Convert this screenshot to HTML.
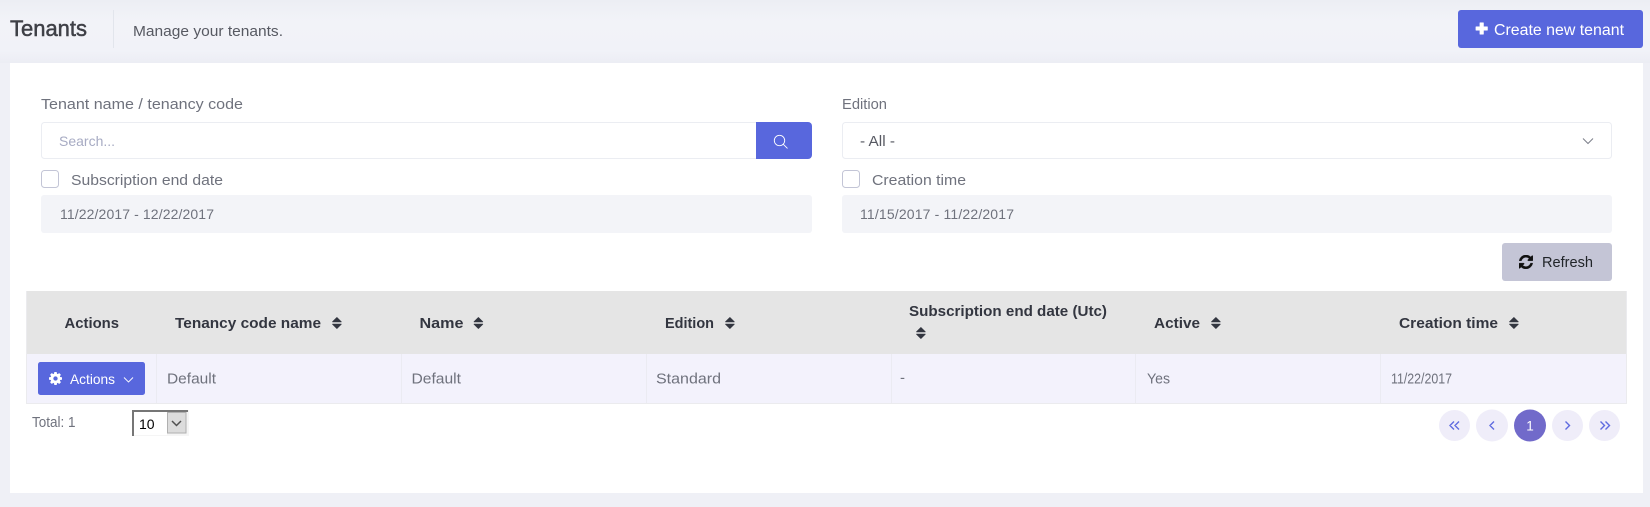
<!DOCTYPE html>
<html lang="en"><head><meta charset="utf-8"><title>Tenants</title>
<style>
html,body{margin:0;padding:0;width:1650px;height:507px;overflow:hidden;background:#eff0f6}
svg{display:block}
text{font-family:"Liberation Sans",sans-serif;font-size:15px;fill:#6f727d}
.b{font-weight:bold;font-size:14.5px;fill:#333640}
</style></head><body>
<svg width="1650" height="507" viewBox="0 0 1650 507" xmlns="http://www.w3.org/2000/svg">
<defs>
<linearGradient id="top" x1="0" y1="0" x2="0" y2="1"><stop offset="0" stop-color="#eceef4"/><stop offset=".35" stop-color="#f2f3f8"/><stop offset=".8" stop-color="#f1f2f8"/><stop offset="1" stop-color="#ecedf4"/></linearGradient>
<g id="sort"><path d="M.6 4.800L4.900 .6 9.200 4.800Z M.6 7.200H9.200L4.900 11.400Z" fill="#333640" stroke="#333640" stroke-width=".9" stroke-linejoin="round"/></g>
</defs>
<rect width="1650" height="507" fill="#eff0f6"/>
<rect width="1650" height="63" fill="url(#top)"/>
<!-- subheader -->
<text x="10" y="36" style="font-size:22px;fill:#3f4047;stroke:#3f4047;stroke-width:.5" textLength="77" lengthAdjust="spacingAndGlyphs">Tenants</text>
<rect x="113" y="10" width="1" height="38" fill="#e2e5ec"/>
<text x="133" y="36" style="fill:#575962" textLength="150" lengthAdjust="spacingAndGlyphs">Manage your tenants.</text>
<rect x="1458" y="10" width="185" height="38" rx="3" fill="#5867dd"/>
<path d="M1479.900 22.700h3.600v4h4v3.600h-4v4h-3.600v-4h-4v-3.600h4z" fill="#fff" stroke="#fff" stroke-width=".5" stroke-linejoin="round"/>
<text x="1494" y="35" style="font-size:15.500px;fill:#fff" textLength="130" lengthAdjust="spacingAndGlyphs">Create new tenant</text>
<!-- card -->
<rect x="10" y="63" width="1633" height="430" fill="#fff"/>
<!-- filters -->
<text x="41" y="109" textLength="202" lengthAdjust="spacingAndGlyphs">Tenant name / tenancy code</text>
<rect x="41.500" y="122.500" width="720" height="36" rx="3" fill="#fff" stroke="#ebedf2"/>
<text x="59" y="146" style="font-size:14px;fill:#a7abc3">Search...</text>
<path d="M756 122H808a4 4 0 0 1 4 4V155a4 4 0 0 1-4 4H756Z" fill="#5867dd"/>
<circle cx="779.500" cy="140.500" r="5.200" fill="none" stroke="#fff" stroke-width=".9"/>
<path d="M783.300 144.300L787.500 148.400" stroke="#fff" stroke-width=".9" fill="none"/>
<text x="842" y="109" textLength="45" lengthAdjust="spacingAndGlyphs">Edition</text>
<rect x="842.500" y="122.500" width="769" height="36" rx="3" fill="#fff" stroke="#ebedf2"/>
<text x="860" y="146" style="fill:#575962" textLength="35" lengthAdjust="spacingAndGlyphs">- All -</text>
<path d="M1583 138.500L1588 143.500 1593 138.500" fill="none" stroke="#7b7e8a" stroke-width="1"/>
<rect x="41.500" y="170.500" width="17" height="17" rx="3" fill="#fff" stroke="#c3c5d6"/>
<text x="71" y="185" textLength="152" lengthAdjust="spacingAndGlyphs">Subscription end date</text>
<rect x="842.500" y="170.500" width="17" height="17" rx="3" fill="#fff" stroke="#c3c5d6"/>
<text x="872" y="185" textLength="94" lengthAdjust="spacingAndGlyphs">Creation time</text>
<rect x="41" y="195" width="771" height="38" rx="3" fill="#f3f4f8"/>
<rect x="842" y="195" width="770" height="38" rx="3" fill="#f3f4f8"/>
<text x="60" y="219" style="font-size:14px" textLength="154">11/22/2017 - 12/22/2017</text>
<text x="860" y="219" style="font-size:14px" textLength="154">11/15/2017 - 11/22/2017</text>
<rect x="1502" y="243" width="110" height="38" rx="3" fill="#c4c5d6"/>
<svg x="1519" y="255" width="14" height="14" viewBox="130 130 1540 1540"><path fill="#111" stroke="#111" stroke-width="40" d="M1639 1056q0 5-1 7-64 268-268 434.500t-478 166.500q-146 0-282.500-55t-243.500-157l-129 129q-19 19-45 19t-45-19-19-45v-448q0-26 19-45t45-19h448q26 0 45 19t19 45-19 45l-137 137q71 66 161 102t187 36q134 0 250-65t186-179q11-17 53-117 8-23 30-23h192q13 0 22.500 9.500t9.500 22.500zm25-800v448q0 26-19 45t-45 19h-448q-26 0-45-19t-19-45 19-45l138-138q-148-137-349-137-134 0-250 65t-186 179q-11 17-53 117-8 23-30 23h-199q-13 0-22.500-9.500t-9.500-22.500v-7q65-268 270-434.500t480-166.500q146 0 284 55.500t245 156.500l130-129q19-19 45-19t45 19 19 45z"/></svg>
<text x="1542" y="267" style="fill:#212529" textLength="51" lengthAdjust="spacingAndGlyphs">Refresh</text>
<!-- table -->
<rect x="26" y="291" width="1601" height="63" fill="#e5e5e5"/>
<rect x="26" y="354" width="1601" height="49" fill="#f3f2fc"/>
<path d="M26 403.500H1627M26.500 291V403M1626.500 291V403" stroke="#ebebee" fill="none"/>
<path d="M156.500 354V403M401.500 354V403M646.500 354V403M891.500 354V403M1135.500 354V403M1380.500 354V403" stroke="#ebebf2" fill="none"/>
<text class="b" x="64.500" y="328" textLength="54.500" lengthAdjust="spacingAndGlyphs">Actions</text>
<text class="b" x="175" y="328" textLength="146" lengthAdjust="spacingAndGlyphs">Tenancy code name</text>
<use href="#sort" x="332" y="317"/>
<text class="b" x="419.500" y="328" textLength="44" lengthAdjust="spacingAndGlyphs">Name</text>
<use href="#sort" x="473.500" y="317"/>
<text class="b" x="665" y="328" textLength="49" lengthAdjust="spacingAndGlyphs">Edition</text>
<use href="#sort" x="725" y="317"/>
<text class="b" x="909" y="316" textLength="198" lengthAdjust="spacingAndGlyphs">Subscription end date (Utc)</text>
<use href="#sort" x="916" y="327"/>
<text class="b" x="1154" y="328" textLength="46" lengthAdjust="spacingAndGlyphs">Active</text>
<use href="#sort" x="1211" y="317"/>
<text class="b" x="1399" y="328" textLength="99" lengthAdjust="spacingAndGlyphs">Creation time</text>
<use href="#sort" x="1509" y="317"/>
<rect x="38" y="362" width="107" height="33" rx="2.500" fill="#5867dd"/>
<svg x="49" y="372" width="13" height="13" viewBox="128 128 1536 1536"><path fill="#fff" d="M1152 896q0-106-75-181t-181-75-181 75-75 181 75 181 181 75 181-75 75-181zm512-109v222q0 12-8 23t-20 13l-185 28q-19 54-39 91 35 50 107 138 10 12 10 25t-9 23q-27 37-99 108t-94 71q-12 0-26-9l-138-108q-44 23-91 38-16 136-29 186-7 28-36 28h-222q-14 0-24.500-8.500t-11.500-21.500l-28-184q-49-16-90-37l-141 107q-10 9-25 9-14 0-25-11-126-114-165-168-7-10-7-23 0-12 8-23 15-21 51-66.500t54-70.500q-27-50-41-99l-183-27q-13-2-21-12.500t-8-23.500v-222q0-12 8-23t19-13l186-28q14-46 39-92-40-57-107-138-10-12-10-24 0-10 9-23 26-36 98.500-107.500t94.500-71.500q13 0 26 10l138 107q44-23 91-38 16-136 29-186 7-28 36-28h222q14 0 24.500 8.500t11.500 21.500l28 184q49 16 90 37l142-107q9-9 24-9 13 0 25 10 129 119 165 170 7 8 7 22 0 12-8 23-15 21-51 66.500t-54 70.500q26 50 41 98l183 28q13 2 21 12.500t8 23.500z"/></svg>
<text x="70" y="384" style="font-size:14px;fill:#fff" textLength="45" lengthAdjust="spacingAndGlyphs">Actions</text>
<path d="M124 377.500L128.500 382 133 377.500" fill="none" stroke="#fff" stroke-width=".9"/>
<text x="167" y="383.500" textLength="49" lengthAdjust="spacingAndGlyphs">Default</text>
<text x="411.500" y="383.500" textLength="49.500" lengthAdjust="spacingAndGlyphs">Default</text>
<text x="656" y="383.500" textLength="65" lengthAdjust="spacingAndGlyphs">Standard</text>
<text x="900" y="382.500">-</text>
<text x="1147" y="383.500" textLength="23" lengthAdjust="spacingAndGlyphs">Yes</text>
<text x="1391" y="383.500" textLength="61" lengthAdjust="spacingAndGlyphs">11/22/2017</text>
<!-- footer -->
<text x="32" y="427" textLength="43.500" lengthAdjust="spacingAndGlyphs">Total: 1</text>
<rect x="132" y="410" width="57" height="26" fill="#f5f5f5"/>
<path d="M133 436V411H188" fill="none" stroke="#767676" stroke-width="2"/>
<rect x="134" y="412" width="33" height="23" fill="#fff"/>
<rect x="167.500" y="412.500" width="18.500" height="20.500" fill="#dcdcdc" stroke="#b0b0b0"/>
<path d="M172 421L176.500 425.500 181 421" fill="none" stroke="#505050" stroke-width="1.500"/>
<text x="139" y="429" style="font-size:14px;fill:#000">10</text>
<circle cx="1454.500" cy="425.500" r="15.500" fill="#efedf9"/>
<circle cx="1492" cy="425.500" r="16" fill="#efedf9"/>
<circle cx="1530" cy="425.500" r="16" fill="#716aca"/>
<circle cx="1567.500" cy="425.500" r="15.500" fill="#efedf9"/>
<circle cx="1604.500" cy="425.500" r="15.500" fill="#efedf9"/>
<path d="M1454 421.500L1450 425.500 1454 429.500M1459 421.500L1455 425.500 1459 429.500M1494 421.500L1490 425.500 1494 429.500M1565.500 421.500L1569.500 425.500 1565.500 429.500M1600.500 421.500L1604.500 425.500 1600.500 429.500M1605.500 421.500L1609.500 425.500 1605.500 429.500" fill="none" stroke="#5f6be0" stroke-width="1.400"/>
<text x="1530" y="430.500" style="font-size:13.500px;fill:#fff" text-anchor="middle">1</text>
</svg>
</body></html>
